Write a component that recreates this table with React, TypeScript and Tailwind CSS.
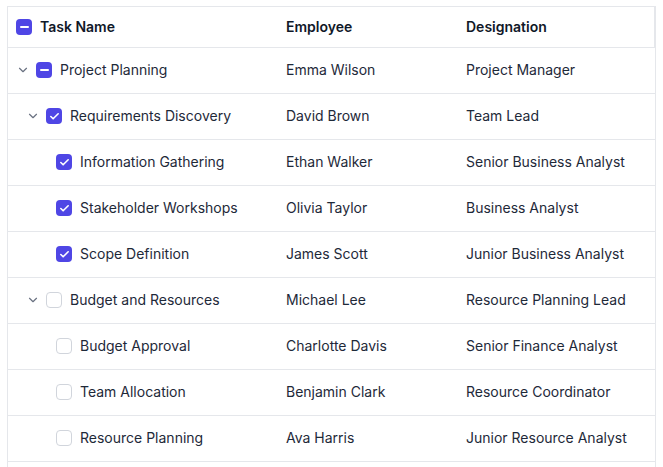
import { ChevronDown, Check } from 'lucide-react';

type State = 'checked' | 'partial' | 'empty';

type Task = {
  name: string;
  employee: string;
  role: string;
  level: number;
  state: State;
  parent?: boolean;
};

const tasks: Task[] = [
  { name: 'Project Planning', employee: 'Emma Wilson', role: 'Project Manager', level: 0, state: 'partial', parent: true },
  { name: 'Requirements Discovery', employee: 'David Brown', role: 'Team Lead', level: 1, state: 'checked', parent: true },
  { name: 'Information Gathering', employee: 'Ethan Walker', role: 'Senior Business Analyst', level: 2, state: 'checked' },
  { name: 'Stakeholder Workshops', employee: 'Olivia Taylor', role: 'Business Analyst', level: 2, state: 'checked' },
  { name: 'Scope Definition', employee: 'James Scott', role: 'Junior Business Analyst', level: 2, state: 'checked' },
  { name: 'Budget and Resources', employee: 'Michael Lee', role: 'Resource Planning Lead', level: 1, state: 'empty', parent: true },
  { name: 'Budget Approval', employee: 'Charlotte Davis', role: 'Senior Finance Analyst', level: 2, state: 'empty' },
  { name: 'Team Allocation', employee: 'Benjamin Clark', role: 'Resource Coordinator', level: 2, state: 'empty' },
  { name: 'Resource Planning', employee: 'Ava Harris', role: 'Junior Resource Analyst', level: 2, state: 'empty' },
];

const Box = ({ state }: { state: State }) => {
  if (state === 'empty') {
    return <span className="w-4 h-4 shrink-0 rounded-[4px] border border-gray-300 bg-white" />;
  }
  return (
    <span className="w-4 h-4 shrink-0 rounded-[4px] bg-[#4f46e5] flex items-center justify-center">
      {state === 'checked' ? (
        <Check size={11} strokeWidth={3.5} className="text-white" />
      ) : (
        <span className="w-[9px] h-[2px] bg-white rounded-full" />
      )}
    </span>
  );
};

const indent = ['pl-2', 'pl-[18px]', 'pl-[28px]'];

export default function App() {
  return (
    <div className="bg-white h-screen pt-[6px] pl-[7px] font-['Inter',sans-serif] text-sm">
      <div className="w-[649px] h-full overflow-hidden border-x border-t border-gray-200">
        <div className="flex h-[41px] border-b border-r border-gray-200 font-semibold text-gray-900">
          <div className="w-[270px] px-2 flex items-center gap-2">
            <Box state="partial" />
            <span>Task Name</span>
          </div>
          <div className="w-[180px] px-2 flex items-center">Employee</div>
          <div className="flex-1 px-2 flex items-center">Designation</div>
        </div>
        {tasks.map((t) => (
          <div key={t.name} className="flex h-[46px] pb-px border-b border-gray-200 text-gray-800">
            <div className={`w-[270px] pr-2 flex items-center ${indent[t.level]}`}>
              <span className="w-[14px] shrink-0 flex items-center justify-center text-gray-500">
                {t.parent && <ChevronDown size={14} strokeWidth={2} />}
              </span>
              <span className="ml-[6px] mr-2 flex">
                <Box state={t.state} />
              </span>
              <span>{t.name}</span>
            </div>
            <div className="w-[180px] px-2 flex items-center">{t.employee}</div>
            <div className="flex-1 px-2 flex items-center">{t.role}</div>
          </div>
        ))}
        <div className="h-[46px]" />
      </div>
    </div>
  );
}
